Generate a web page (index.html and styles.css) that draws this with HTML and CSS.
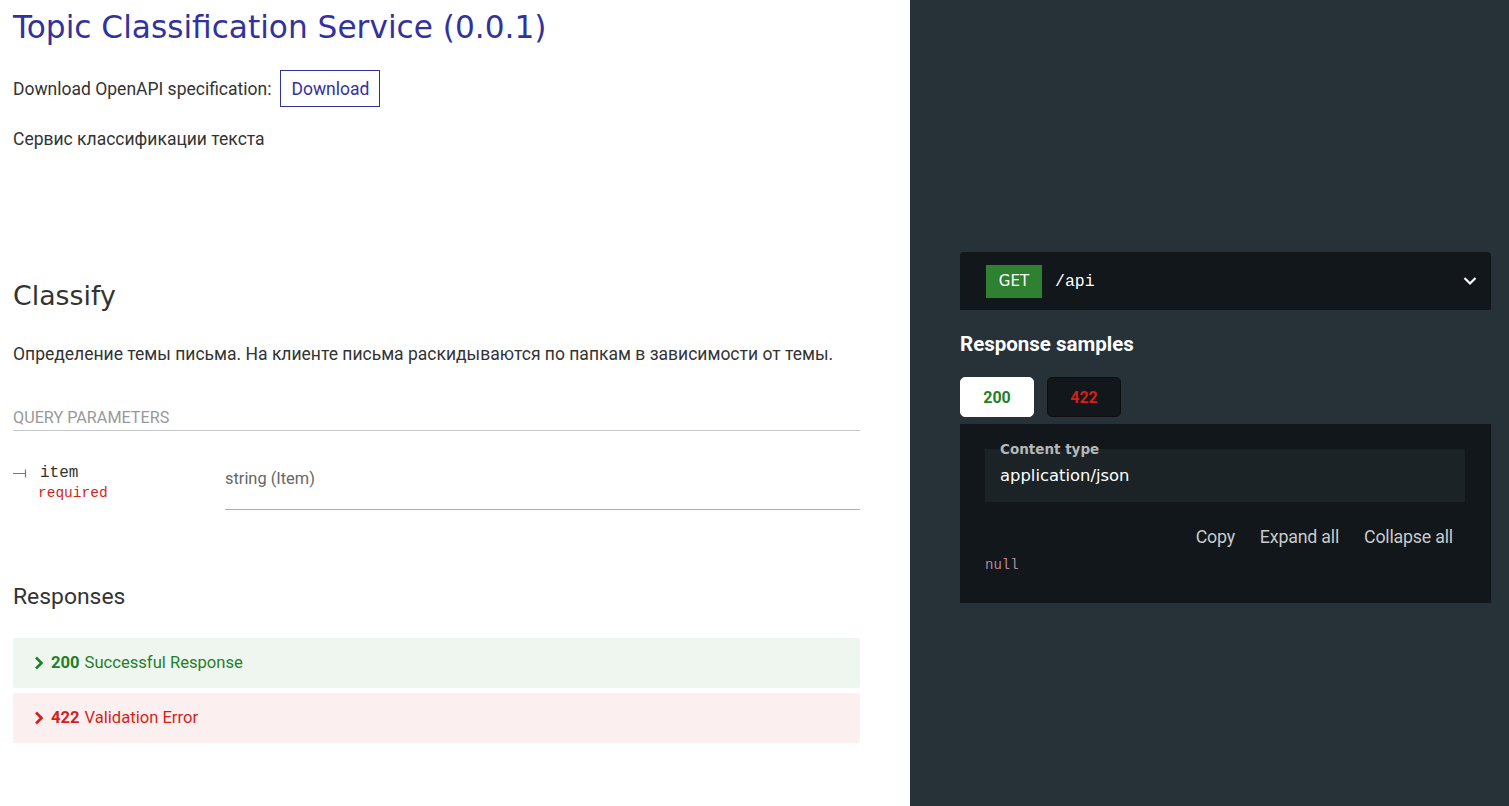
FILE: index.html
```html
<!DOCTYPE html>
<html lang="en">
<head>
<meta charset="utf-8">
<title>Topic Classification Service</title>
<link rel="stylesheet" href="styles.css">
</head>
<body>
<div class="page">
  <main class="middle">
    <h1 class="api-title">Topic Classification Service (0.0.1)</h1>
    <p class="download">Download OpenAPI specification: <a class="download-btn" href="#">Download</a></p>
    <p class="lead">Сервис классификации текста</p>

    <h2 class="op-title">Classify</h2>
    <p class="op-desc">Определение темы письма. На клиенте письма раскидываются по папкам в зависимости от темы.</p>

    <h5 class="params-title">Query Parameters</h5>
    <div class="param-row">
      <div class="param-name">
        <div class="param-line">
          <svg class="param-tick" width="14" height="10" viewBox="0 0 14 10"><path d="M0 5.5H12.5M12.5 1.5V9.5" stroke="#6f6fb6" stroke-width="1.2" fill="none"/></svg>
          <span class="param-key">item</span>
        </div>
        <div class="param-req">required</div>
      </div>
      <div class="param-info">
        <span class="param-type">string (Item)</span>
      </div>
    </div>

    <h3 class="responses-title">Responses</h3>
    <div class="response ok">
      <svg class="chev" width="10" height="14" viewBox="0 0 10 14"><path d="M2 1.5L7.5 7L2 12.5" stroke="currentColor" stroke-width="2.6" fill="none"/></svg>
      <strong>200</strong> Successful Response
    </div>
    <div class="response err">
      <svg class="chev" width="10" height="14" viewBox="0 0 10 14"><path d="M2 1.5L7.5 7L2 12.5" stroke="currentColor" stroke-width="2.6" fill="none"/></svg>
      <strong>422</strong> Validation Error
    </div>
  </main>

  <aside class="samples">
    <div class="endpoint">
      <span class="method">GET</span>
      <span class="path">/api</span>
      <svg class="down" width="14" height="10" viewBox="0 0 14 10"><path d="M1.5 2L7 7.5L12.5 2" stroke="#fff" stroke-width="2.2" fill="none"/></svg>
    </div>

    <h3 class="samples-title">Response samples</h3>
    <div class="tabs">
      <button class="tab active">200</button>
      <button class="tab bad">422</button>
    </div>

    <div class="sample-panel">
      <div class="ctype">
        <span class="ctype-label">Content type</span>
        <span class="ctype-value">application/json</span>
      </div>
      <div class="controls">
        <button class="ctl">Copy</button>
        <button class="ctl">Expand all</button>
        <button class="ctl">Collapse all</button>
      </div>
      <pre class="code">null</pre>
    </div>
  </aside>
</div>
</body>
</html>
```

FILE: styles.css
```css
* { box-sizing: border-box; }

html, body {
  margin: 0;
  padding: 0;
  background: #ffffff;
}

body {
  font-family: Roboto, "Liberation Sans", sans-serif;
  font-size: 17.5px;
  color: #333333;
}

.page {
  display: flex;
  min-height: 806px;
}

/* ---------- middle column ---------- */
.middle {
  width: 910px;
  flex: 0 0 910px;
  padding: 9px 50px 40px 13px;
}

.api-title {
  margin: 0;
  font-family: "DejaVu Sans", sans-serif;
  font-weight: 400;
  font-size: 31.2px;
  line-height: 36px;
  color: #32329f;
}

.download {
  margin: 25px 0 0;
  display: flex;
  align-items: center;
  line-height: 20px;
}

.download-btn {
  display: inline-flex;
  align-items: center;
  justify-content: center;
  width: 100px;
  height: 37px;
  margin-left: 9px;
  border: 1px solid #32329f;
  color: #32329f;
  text-decoration: none;
}

.lead {
  margin: 22px 0 0;
  line-height: 20px;
}

.op-title {
  margin: 131px 0 0;
  font-family: "DejaVu Sans", sans-serif;
  font-weight: 400;
  font-size: 26.8px;
  line-height: 32px;
  color: #333333;
}

.op-desc {
  margin: 32px 0 0;
  line-height: 20px;
}

.params-title {
  margin: 44px 0 0;
  padding-bottom: 2px;
  font-size: 16.2px;
  font-weight: 400;
  line-height: 20px;
  text-transform: uppercase;
  color: #999999;
  border-bottom: 1px solid #c3c6c8;
}

.param-row {
  display: flex;
  margin-top: 28px;
}

.param-name {
  width: 212px;
  flex: 0 0 212px;
  padding-top: 6px;
  font-family: "Courier New", "Liberation Mono", monospace;
}

.param-line {
  display: flex;
  align-items: center;
  height: 16px;
}

.param-tick {
  display: block;
  margin-right: 13px;
}

.param-key {
  font-size: 16px;
  line-height: 16px;
  color: #333333;
}

.param-req {
  margin: 4px 0 0 25px;
  font-size: 14.5px;
  line-height: 16px;
  color: #d41f1c;
}

.param-info {
  flex: 1;
  padding: 10px 0 20px;
  border-bottom: 1px solid #9fb4be;
  line-height: 20px;
  font-size: 16.4px;
}

.param-type {
  color: #666666;
}

.responses-title {
  margin: 74px 0 0;
  font-size: 22.9px;
  font-weight: 400;
  line-height: 26px;
  color: #333333;
}

.response {
  display: flex;
  align-items: center;
  height: 50px;
  padding-left: 21px;
  border-radius: 2px;
  line-height: 20px;
  font-size: 16.6px;
}

.response strong {
  margin: 0 5px 0 7px;
  font-weight: 700;
}

.response .chev { display: block; }

.response.ok {
  margin-top: 28px;
  background: #eff6f0;
  color: #1d8127;
}

.response.err {
  margin-top: 5px;
  background: #fcefef;
  color: #d41f1c;
}

/* ---------- right column ---------- */
.samples {
  flex: 1;
  background: #263238;
  padding: 252px 18px 40px 50px;
  color: #ffffff;
}

.endpoint {
  display: flex;
  align-items: center;
  height: 58px;
  padding: 0 14px 0 26px;
  background: #11171a;
  border-radius: 4px 4px 0 0;
}

.method {
  display: inline-flex;
  align-items: center;
  justify-content: center;
  width: 56px;
  height: 33px;
  background: #2f8132;
  color: #ffffff;
  font-family: "DejaVu Sans", sans-serif;
  font-size: 15px;
}

.path {
  margin-left: 13px;
  flex: 1;
  font-family: "Courier New", "Liberation Mono", monospace;
  font-size: 16.5px;
  color: #ffffff;
}

.down { display: block; }

.samples-title {
  margin: 22px 0 0;
  font-size: 20.5px;
  font-weight: 700;
  line-height: 24px;
  color: #ffffff;
}

.tabs {
  display: flex;
  gap: 13px;
  margin-top: 21px;
}

.tab {
  width: 74px;
  height: 40px;
  border-radius: 5px;
  font-family: Roboto, "Liberation Sans", sans-serif;
  font-size: 16px;
  font-weight: 700;
  padding: 0;
}

.tab.active {
  background: #ffffff;
  border: 1px solid #ffffff;
  color: #1d8127;
}

.tab.bad {
  background: #11171a;
  border: 1px solid #0b0f11;
  color: #d41f1c;
}

.sample-panel {
  margin-top: 7px;
  background: #11171a;
  padding: 25px 26px 30px 25px;
  height: 179px;
}

.ctype {
  position: relative;
  display: flex;
  align-items: center;
  height: 53px;
  padding-left: 15px;
  background: #1c2327;
}

.ctype-label {
  position: absolute;
  left: 15px;
  top: -8px;
  font-family: "DejaVu Sans", sans-serif;
  font-size: 13.5px;
  font-weight: 700;
  line-height: 16px;
  color: #b4b6b7;
}

.ctype-value {
  font-family: "DejaVu Sans", sans-serif;
  font-size: 16.4px;
  color: #ffffff;
}

.controls {
  display: flex;
  justify-content: flex-end;
  margin-top: 23px;
}

.ctl {
  background: none;
  border: 0;
  padding: 0 12.5px;
  font-family: Roboto, "Liberation Sans", sans-serif;
  font-size: 17.8px;
  line-height: 24px;
  color: #c8cacb;
  letter-spacing: -0.2px;
}

.ctl:last-child { padding-right: 12px; }

.code {
  margin: 8px 0 0;
  font-family: "Courier New", "Liberation Mono", monospace;
  font-size: 14px;
  line-height: 16px;
  color: #b8879a;
}
```
